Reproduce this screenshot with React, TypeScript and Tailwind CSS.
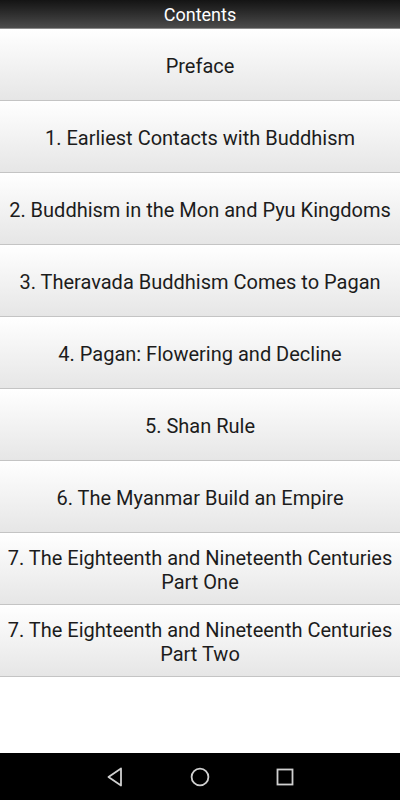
const chapters: string[][] = [
  ["Preface"],
  ["1. Earliest Contacts with Buddhism"],
  ["2. Buddhism in the Mon and Pyu Kingdoms"],
  ["3. Theravada Buddhism Comes to Pagan"],
  ["4. Pagan: Flowering and Decline"],
  ["5. Shan Rule"],
  ["6. The Myanmar Build an Empire"],
  ["7. The Eighteenth and Nineteenth Centuries", "Part One"],
  ["7. The Eighteenth and Nineteenth Centuries", "Part Two"],
];

export default function App() {
  return (
    <div className="flex h-[800px] w-[400px] flex-col bg-white font-['Roboto',sans-serif]">
      {/* Title bar */}
      <div className="flex h-[29px] shrink-0 items-center justify-center border-b border-[#8a8a8a] bg-gradient-to-b from-[#141414] to-[#4c4c4c] pt-[2px]">
        <span className="text-[18px] leading-none text-white">Contents</span>
      </div>

      {/* Chapter list */}
      <div className="flex-1">
        {chapters.map((lines, i) => (
          <div
            key={i}
            className="flex h-[72px] flex-col items-center justify-center border-b border-[#c4c4c4] bg-gradient-to-b from-white to-[#e6e6e6] pt-[3px] text-center text-[20px] leading-[24px] text-[#1c1c1c]"
          >
            {lines.map((l) => (
              <span key={l}>{l}</span>
            ))}
          </div>
        ))}
      </div>

      {/* Navigation bar */}
      <div className="flex h-[47px] shrink-0 items-center justify-center gap-[65px] bg-black">
        <svg width="20" height="20" viewBox="0 0 20 20">
          <path d="M16 1.5 L3.5 10 L16 18.5 Z" fill="none" stroke="#d0d0d0" strokeWidth="1.8" strokeLinejoin="round" />
        </svg>
        <svg width="20" height="20" viewBox="0 0 20 20">
          <circle cx="10" cy="10" r="8.4" fill="none" stroke="#d0d0d0" strokeWidth="1.8" />
        </svg>
        <svg width="20" height="20" viewBox="0 0 20 20">
          <rect x="2.5" y="2.5" width="15" height="15" fill="none" stroke="#d0d0d0" strokeWidth="1.8" />
        </svg>
      </div>
    </div>
  );
}
